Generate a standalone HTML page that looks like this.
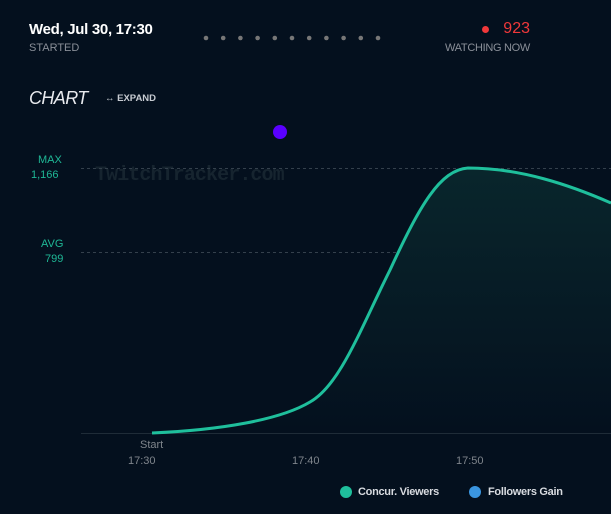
<html><head><style>
body{margin:0;width:611px;height:514px;background:#04101e;font-family:"Liberation Sans",sans-serif;overflow:hidden;position:relative}
.a{position:absolute;white-space:nowrap}
</style></head><body>
<div class="a" style="left:29px;top:21px;color:#fff;font-weight:bold;font-size:15px;letter-spacing:-0.3px">Wed, Jul 30, 17:30</div>
<div class="a" style="left:29px;top:42px;color:#8a8f98;font-size:11px">STARTED</div>
<div class="a" style="right:81px;top:20px;color:#f0383a;font-size:16px">923</div>
<div class="a" style="left:482px;top:26px;width:7px;height:7px;border-radius:50%;background:#f0383a"></div>
<div class="a" style="right:81px;top:42px;color:#8a8f98;font-size:11px;letter-spacing:-0.3px">WATCHING NOW</div>
<div class="a" style="left:29px;top:88px;color:#e8eaee;font-size:18px;font-style:italic;letter-spacing:-0.6px">CHART</div>
<div class="a" style="left:105px;top:93px;color:#c8ccd2;font-size:9.5px;font-weight:bold">↔ EXPAND</div>
<div class="a" style="left:38px;top:154px;color:#1fb896;font-size:11px">MAX</div>
<div class="a" style="left:31px;top:169px;color:#1fb896;font-size:11px">1,166</div>
<div class="a" style="left:41px;top:238px;color:#1fb896;font-size:11px">AVG</div>
<div class="a" style="left:45px;top:253px;color:#1fb896;font-size:11px">799</div>
<div class="a" style="left:95px;top:164px;color:#16242f;font-family:'Liberation Mono',monospace;font-weight:bold;font-size:20px;letter-spacing:-0.9px">TwitchTracker.com</div>
<svg class="a" style="left:0;top:0" width="611" height="514">
<g fill="#777">
<circle cx="206" cy="38" r="2.3"/><circle cx="223.2" cy="38" r="2.3"/><circle cx="240.4" cy="38" r="2.3"/><circle cx="257.6" cy="38" r="2.3"/><circle cx="274.8" cy="38" r="2.3"/><circle cx="292" cy="38" r="2.3"/><circle cx="309.2" cy="38" r="2.3"/><circle cx="326.4" cy="38" r="2.3"/><circle cx="343.6" cy="38" r="2.3"/><circle cx="360.8" cy="38" r="2.3"/><circle cx="378" cy="38" r="2.3"/>
</g>
<circle cx="280" cy="132" r="7" fill="#5a00ff"/>
<line x1="81" y1="168.5" x2="611" y2="168.5" stroke="#34404c" stroke-dasharray="3,3"/>
<line x1="81" y1="252.5" x2="611" y2="252.5" stroke="#34404c" stroke-dasharray="3,3"/>
<line x1="81" y1="433.5" x2="611" y2="433.5" stroke="#1f2c38"/>
<defs><linearGradient id="g" x1="0" y1="0" x2="0" y2="1"><stop offset="0" stop-color="#09262c"/><stop offset="1" stop-color="#04101e"/></linearGradient></defs>
<path d="M152,433 C220,430 280,420 310,402 C340,385 360,330 390,270 C420,205 440,170 468,168 C520,168 570,185 611,203 L611,433 L152,433Z" fill="url(#g)"/>
<path d="M152,433 C220,430 280,420 310,402 C340,385 360,330 390,270 C420,205 440,170 468,168 C520,168 570,185 611,203" fill="none" stroke="#1fbf9c" stroke-width="3"/>
<circle cx="346" cy="492" r="6" fill="#1fbf9c"/>
<circle cx="475" cy="492" r="6" fill="#3a95e0"/>
</svg>
<div class="a" style="left:140px;top:439px;color:#7f858c;font-size:11px">Start</div>
<div class="a" style="left:128px;top:455px;color:#7f858c;font-size:11px">17:30</div>
<div class="a" style="left:292px;top:455px;color:#7f858c;font-size:11px">17:40</div>
<div class="a" style="left:456px;top:455px;color:#7f858c;font-size:11px">17:50</div>
<div class="a" style="left:358px;top:486px;color:#d8dbe0;font-size:11px;font-weight:bold;letter-spacing:-0.3px">Concur. Viewers</div>
<div class="a" style="left:488px;top:486px;color:#d8dbe0;font-size:11px;font-weight:bold;letter-spacing:-0.3px">Followers Gain</div>
</body></html>
